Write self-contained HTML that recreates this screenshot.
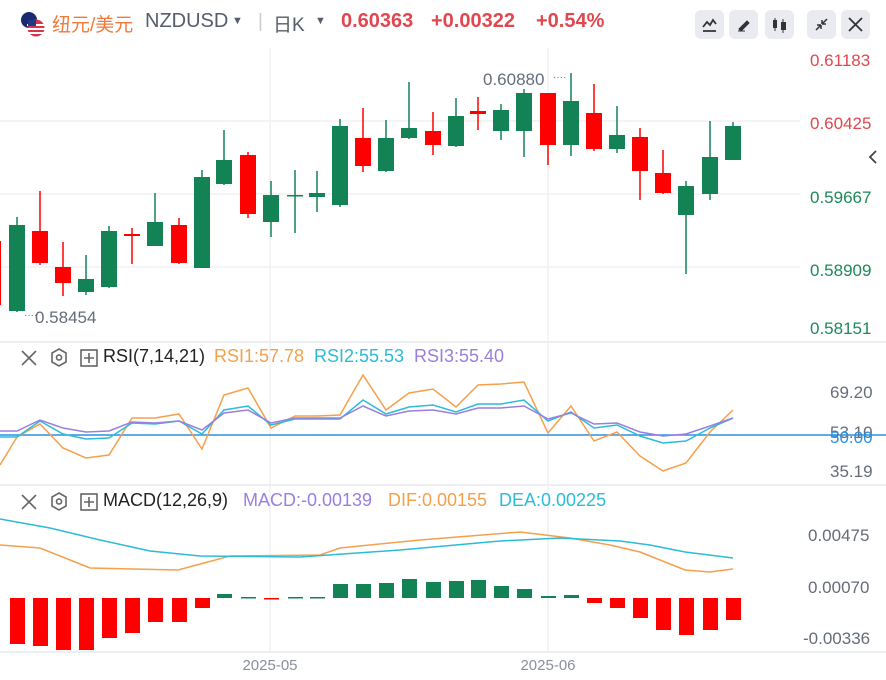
<!DOCTYPE html>
<html><head><meta charset="utf-8"><style>
body{margin:0;width:886px;height:680px;overflow:hidden;background:#fff;font-family:"Liberation Sans","Noto Sans CJK SC",sans-serif;position:relative}
.t{position:absolute;white-space:nowrap}
.btn{position:absolute;top:10px;width:29px;height:29px;background:#e9ebf0;border-radius:6px}
</style></head><body>
<svg class="t" style="left:19px;top:10px" width="28" height="28" viewBox="0 0 28 28"><circle cx="10" cy="10" r="8" fill="#1a2a6c"/><circle cx="17" cy="18" r="8.5" fill="#d8344b"/><rect x="8" y="14" width="18" height="2" fill="#fff"/><rect x="8" y="18" width="18" height="2" fill="#fff"/><rect x="9" y="22" width="16" height="2" fill="#fff"/><rect x="9" y="10" width="8" height="6" fill="#1a3a8c"/></svg>
<div class="t" style="left:52px;top:10px;font-size:19px;color:#ef7a3c">纽元/美元</div>
<div class="t" style="left:145px;top:10px;font-size:20px;color:#555c6b">NZDUSD</div>
<div class="t" style="left:232px;top:15px;font-size:11px;color:#555c6b">▼</div>
<div class="t" style="left:258px;top:11px;font-size:19px;color:#ccc">|</div>
<div class="t" style="left:273px;top:10px;font-size:19px;color:#555c6b">日K</div>
<div class="t" style="left:315px;top:15px;font-size:11px;color:#555c6b">▼</div>
<div class="t" style="left:341px;top:10px;font-size:20px;font-weight:bold;color:#e0474f">0.60363</div>
<div class="t" style="left:431px;top:10px;font-size:20px;font-weight:bold;color:#e0474f">+0.00322</div>
<div class="t" style="left:536px;top:10px;font-size:20px;font-weight:bold;color:#e0474f">+0.54%</div>
<div class="btn" style="left:695px"><svg width="29" height="29"><path d="M8 17l4-5 3 3 3-5 3 4M8 21h13" stroke="#333" stroke-width="1.8" fill="none"/></svg></div>
<div class="btn" style="left:729px"><svg width="29" height="29"><path d="M9 21h7M10 19l8-8 2 2-8 8z" fill="#333" stroke="#333"/></svg></div>
<div class="btn" style="left:765px"><svg width="29" height="29"><rect x="8" y="10" width="4" height="8" fill="#333"/><rect x="16" y="12" width="5" height="8" fill="#333"/><path d="M10 8v13M18 9v14" stroke="#333"/></svg></div>
<div class="btn" style="left:807px"><svg width="29" height="29"><path d="M9 20l5-5M14 15v4M14 15h-4M20 9l-5 5M15 14v-4M15 14h4" stroke="#333" stroke-width="1.5" fill="none"/></svg></div>
<div class="btn" style="left:841px"><svg width="29" height="29"><path d="M8 8l13 13M21 8L8 21" stroke="#333" stroke-width="1.8"/></svg></div>
<svg id="c" width="886" height="680" style="position:absolute;left:0;top:0"></svg>
<svg class="t" style="left:0;top:344px" width="104" height="28"><g stroke="#666" stroke-width="1.6" fill="none"><path d="M22 7l14 14M36 7L22 21"/><path d="M59 5l7 4v9l-7 4-7-4V9z"/><circle cx="59" cy="13.5" r="2.5"/><rect x="81" y="6" width="16" height="16"/><path d="M89 9v10M84 14h10"/></g></svg>
<div class="t" style="left:103px;top:346px;font-size:18px;color:#222">RSI(7,14,21)</div>
<div class="t" style="left:214px;top:346px;font-size:18px;color:#f5a04c">RSI1:57.78</div>
<div class="t" style="left:314px;top:346px;font-size:18px;color:#2bbcd8">RSI2:55.53</div>
<div class="t" style="left:414px;top:346px;font-size:18px;color:#9a7fe0">RSI3:55.40</div>
<svg class="t" style="left:0;top:488px" width="104" height="28"><g stroke="#666" stroke-width="1.6" fill="none"><path d="M22 7l14 14M36 7L22 21"/><path d="M59 5l7 4v9l-7 4-7-4V9z"/><circle cx="59" cy="13.5" r="2.5"/><rect x="81" y="6" width="16" height="16"/><path d="M89 9v10M84 14h10"/></g></svg>
<div class="t" style="left:103px;top:490px;font-size:18px;color:#222">MACD(12,26,9)</div>
<div class="t" style="left:243px;top:490px;font-size:18px;color:#9a7fe0">MACD:-0.00139</div>
<div class="t" style="left:388px;top:490px;font-size:18px;color:#f5a04c">DIF:0.00155</div>
<div class="t" style="left:499px;top:490px;font-size:18px;color:#2bbcd8">DEA:0.00225</div>
<svg class="t" style="left:866px;top:148px" width="14" height="18"><path d="M10 3L4 9l6 6" stroke="#444" stroke-width="1.8" fill="none"/></svg>
<script>
var s='';
function L(x1,y1,x2,y2,c,w){s+='<line x1="'+x1+'" y1="'+y1+'" x2="'+x2+'" y2="'+y2+'" stroke="'+c+'" stroke-width="'+(w||1)+'"/>';}
function T(x,y,t,c,sz,a){s+='<text x="'+x+'" y="'+y+'" fill="'+c+'" font-size="'+(sz||16)+'" font-family="Liberation Sans" text-anchor="'+(a||'start')+'">'+t+'</text>';}
[121,194,267].forEach(y=>L(0,y,800,y,'#f0f1f4',1.5));
L(270,48,270,652,'#f0f1f4',1.5);L(548,48,548,652,'#f0f1f4',1.5);
L(0,342,886,342,'#eceef2',2);L(0,485,886,485,'#eceef2',2);L(0,652,886,652,'#eceef2',2);
var G='#138356',R='#ff0000';
var xs=[17,40,63,86,109,132,155,179,202,224,248,271,295,317,340,363,386,409,433,456,478,501,524,548,571,594,617,640,663,686,710,733];
var cd=[[G,225,311,217,312],[R,231,263,191,265],[R,267,283,242,296],[G,279,292,255,295],[G,231,287,226,288],[R,234,236,228,264],[G,222,246,193,246],[R,225,263,218,264],[G,177,268,170,268],[G,160,184,130,185],[R,155,214,152,218],[G,195,222,181,237],[G,195,196,170,233],[G,193,197,171,212],[G,126,205,119,207],[R,138,166,108,172],[G,138,171,120,172],[G,128,138,82,139],[R,131,145,112,155],[G,116,146,98,147],[R,111,114,97,130],[G,110,131,104,140],[G,93,131,89,157],[R,93,145,93,165],[G,101,145,73,156],[R,113,149,84,151],[G,135,149,106,153],[R,137,171,128,200],[R,173,193,150,194],[G,186,215,181,274],[G,157,194,121,200],[G,126,160,122,160]];
L(0,241,0,305,R,2);
cd.forEach((c,i)=>{var x=xs[i];L(x,c[3],x,c[4],c[0],1.5);var h=Math.max(c[2]-c[1],1.5);s+='<rect x="'+(x-8)+'" y="'+c[1]+'" width="16" height="'+h+'" fill="'+c[0]+'"/>';});
T(35,323,'0.58454','#666c7a',17);T(24,318,'····','#666',10);
T(483,85,'0.60880','#666c7a',17);T(553,80,'····','#666',10);
T(810,66,'0.61183','#e0474f',17);T(810,129,'0.60425','#e0474f',17);T(810,203,'0.59667','#1b8a5a',17);T(810,276,'0.58909','#1b8a5a',17);T(810,334,'0.58151','#1b8a5a',17);
L(0,435,886,435,'#2b8fe0',1.5);
var o=[437,424,448,458,455,418,418,414,449,395,388,428,416,416,415,375,410,393,389,407,385,384,382,433,406,441,432,456,471,463,432,410];
var cy=[437,421,434,439,438,423,424,421,434,410,406,425,419,419,419,400,414,407,405,412,404,404,400,421,412,428,425,436,443,441,428,418];
var pu=[431,420,428,432,431,422,423,421,430,413,410,423,418,418,418,406,416,411,410,414,408,408,406,419,413,424,423,432,436,434,426,418];
s+='<polyline points="0,465 '+o.map((y,i)=>xs[i]+','+y).join(' ')+'" fill="none" stroke="#f5a04c" stroke-width="1.5"/>';
s+='<polyline points="0,437 '+cy.map((y,i)=>xs[i]+','+y).join(' ')+'" fill="none" stroke="#2bbcd8" stroke-width="1.5"/>';
s+='<polyline points="0,431 '+pu.map((y,i)=>xs[i]+','+y).join(' ')+'" fill="none" stroke="#9a7fe0" stroke-width="1.5"/>';
T(830,398,'69.20','#666c7a',17);T(830,438,'53.10','#666c7a',17);T(830,443,'50.00','#2b8fe0',17);T(830,477,'35.19','#666c7a',17);
var hb=[-46,-48,-52,-52,-40,-35,-24,-24,-10,4,1,0,1,1,14,14,15,19,16,17,18,12,9,2,3,-5,-10,-20,-32,-37,-32,-22];
hb.forEach((v,i)=>{var z=598;var y=v>0?z-v:z;var h=Math.max(Math.abs(v),1.5);s+='<rect x="'+(xs[i]-7)+'" y="'+y+'" width="15" height="'+h+'" fill="'+(v>0?G:R)+'"/>';});
s+='<polyline points="0,545 40,548 90,568 178,570 230,556 320,555 340,548 420,540 520,532 570,538 610,545 640,552 685,570 710,572 733,569" fill="none" stroke="#f5a04c" stroke-width="1.5"/>';
s+='<polyline points="0,519 50,528 100,540 150,551 200,556 300,557 400,550 500,541 560,538 620,541 650,545 685,552 733,558" fill="none" stroke="#2bbcd8" stroke-width="1.5"/>';
T(808,541,'0.00475','#666c7a',17);T(808,593,'0.00070','#666c7a',17);T(803,644,'-0.00336','#666c7a',17);
T(270,670,'2025-05','#8a8f9c',15,'middle');T(548,670,'2025-06','#8a8f9c',15,'middle');
document.getElementById('c').innerHTML=s;
</script>
</body></html>
